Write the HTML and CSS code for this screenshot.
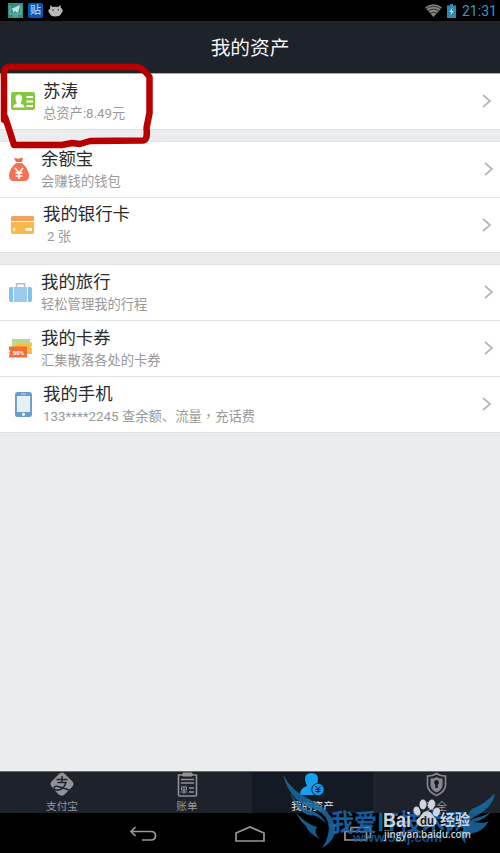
FILE: index.html
```html
<!DOCTYPE html>
<html lang="zh-CN">
<head>
<meta charset="utf-8">
<title>我的资产</title>
<link rel="stylesheet" href="styles.css">
</head>
<body>
<div class="screen">
  <div class="status">
    <svg width="15" height="15" viewBox="0 0 15 15"><rect width="15" height="15" fill="#2f9184"/><path d="M2 3v8h11V3M5 13h5" fill="none" stroke="#79b9af"/><path d="M3 6l9-4-2 8-3-2-2 2V7z" fill="#c9ddd9"/></svg>
    <span class="tieba">贴</span>
    <svg width="15" height="12" viewBox="0 0 15 12"><path d="M2.500 0l2 2Q7 1.500 10 2L12.500 0l.3 3Q15 3.500 14.700 6.300L13.500 8Q12.500 11.500 7 11.500 2.500 11.500 1.700 8.500 0 8 .5 5 1 4 2 4z" fill="#b9b9b9"/><circle cx="5" cy="5" r=".8" fill="#333"/><circle cx="10.300" cy="4.700" r=".8" fill="#333"/></svg>
    <span class="grow"></span>
    <svg width="17" height="13" viewBox="0 0 17 13"><path d="M0 3.500Q8.500-3 17 3.500L8.500 13z" fill="#858585"/><path d="M1 5Q8.500-.5 16 5M3 7.200Q8.500 3 14 7.200M5 9.500Q8.500 6.700 12 9.500" fill="none" stroke="#161616" stroke-width=".8"/></svg>
    <svg width="9" height="14" viewBox="0 0 9 14"><path d="M3 0h3v1.500h3V14H0V1.500h3z" fill="#2c8bb0"/><path d="M5.500 3.500L2.500 8h2L3.500 11.500 6.700 7h-2z" fill="#d5e8ee"/></svg>
    <span class="time">21:31</span>
  </div>
  <header class="title">我的资产</header>

  <main class="list">
    <section class="group">
      <div class="row wide first">
        <svg class="icon" width="24" height="18" viewBox="0 0 24 18"><rect width="24" height="18" rx="2" fill="#84c93d"/><path d="M2 15.500q0-3 4-4Q4.500 9 4.500 6q0-3.500 3.300-3.500T11 6q0 3-1.500 5.500 4 1 4 4z" fill="#fff"/><path d="M15.500 5H22M15.500 9.500H22M15.500 14H22" stroke="#fff" stroke-width="1.800"/></svg>
        <div class="copy"><div class="name">苏涛</div><div class="note">总资产:8.49元</div></div>
        <svg class="arrow near" width="10" height="14" viewBox="0 0 10 14"><path d="M1 1l7 6-7 6"/></svg>
      </div>
    </section>
    <section class="group">
      <div class="row">
        <svg class="icon" width="20" height="25" viewBox="0 0 20 25"><path d="M5 1l4 .8L14 .5l-1 4.500H7z" fill="#ef684c"/><path d="M7 6h6q7 6 7 13 0 5-5 5H5q-5 0-5-5Q0 12 7 6z" fill="#f67150"/><path d="M6 11l4 5 4-5M10 16v6M6.500 16h7M6.500 19h7" fill="none" stroke="#fff" stroke-width="1.700"/></svg>
        <div class="copy"><div class="name">余额宝</div><div class="note">会赚钱的钱包</div></div>
        <svg class="arrow" width="10" height="14" viewBox="0 0 10 14"><path d="M1 1l7 6-7 6"/></svg>
      </div>
      <div class="row wide">
        <svg class="icon" width="23" height="18" viewBox="0 0 23 18"><rect width="23" height="18" rx="2" fill="#f7b850"/><path d="M0 5V2q0-2 2-2h19q2 0 2 2v3z" fill="#f2a25a"/><path d="M0 5.500h23" stroke="#fff3d9"/><path d="M4 12l-1.500 1.500L4 15" fill="none" stroke="#fff0c8" stroke-width="1.300"/><path d="M14.500 13.500H21" stroke="#fff0c8" stroke-width="3"/></svg>
        <div class="copy"><div class="name">我的银行卡</div><div class="note indent">2 张</div></div>
        <svg class="arrow near" width="10" height="14" viewBox="0 0 10 14"><path d="M1 1l7 6-7 6"/></svg>
      </div>
    </section>
    <section class="group">
      <div class="row">
        <svg class="icon" width="23" height="19" viewBox="0 0 23 19"><path d="M7.500 4V.8h8V4" fill="none" stroke="#b8bdc1" stroke-width="1.500"/><rect y="4" width="23" height="15" rx="2" fill="#83c2ed"/><path d="M5 4h13v15H5z" fill="#9acbef"/><path d="M4.500 4v15M18.500 4v15" stroke="#e8f5fc"/></svg>
        <div class="copy"><div class="name">我的旅行</div><div class="note">轻松管理我的行程</div></div>
        <svg class="arrow" width="10" height="14" viewBox="0 0 10 14"><path d="M1 1l7 6-7 6"/></svg>
      </div>
      <div class="row">
        <svg class="icon" width="24" height="20" viewBox="0 0 24 20"><path d="M3 1h18v13H3z" fill="#bcd98a"/><path d="M6 6h14l3-2v3l-1 2 1 2v5H6z" fill="#f8bd47"/><path d="M0 8.500h18v11H0v-2l1-1.500-1-1.500 1-1.500-1-1.500z" fill="#f27035"/><text x="9.500" y="16.500" text-anchor="middle" class="ticket">50%</text></svg>
        <div class="copy"><div class="name">我的卡券</div><div class="note">汇集散落各处的卡券</div></div>
        <svg class="arrow" width="10" height="14" viewBox="0 0 10 14"><path d="M1 1l7 6-7 6"/></svg>
      </div>
      <div class="row wide">
        <svg class="icon handset" width="17" height="25" viewBox="0 0 18 25" preserveAspectRatio="none"><rect width="18" height="25" rx="2.500" fill="#669dcc"/><path d="M2 4h14v16H2z" fill="#e8eff4"/><path d="M6.500 2h5" stroke="#d9e8f4"/><circle cx="9" cy="22.300" r="1.600" fill="#fff"/></svg>
        <div class="copy"><div class="name">我的手机</div><div class="note phone">133****2245 查余额、流量<span class="comma" lang="zh-TW">，</span>充话费</div></div>
        <svg class="arrow near" width="10" height="14" viewBox="0 0 10 14"><path d="M1 1l7 6-7 6"/></svg>
      </div>
    </section>
  </main>

  <nav class="tabs">
    <div class="tab shift"><svg width="24" height="25" viewBox="0 0 24 25"><path d="M9 2q3-3 6 0l7 7q3 3 0 6l-8 8q-3 2-6-1l-6-7q-3-3 0-6z" fill="#919396"/><path d="M6.500 7.500h11M12 4v7M7.500 10.500H16q-2 6-7 7.500-5 .5-5-2 1-3 6-1l12 4" fill="none" stroke="#20252f" stroke-width="1.500"/></svg><span>支付宝</span></div>
    <div class="tab shift more"><svg width="21" height="25" viewBox="0 0 21 25"><path d="M1.500 3h18v20q0 1-1 1h-16q-1 0-1-1z" fill="none" stroke="#8e9093" stroke-width="1.600"/><path d="M6 1h9v3H6z" fill="#919396" stroke="#919396"/><path d="M4 7.500h13M4 11h13M12 16h5M12 20h5" stroke="#919396" stroke-width="1.500"/><path d="M5 13.500l1 1M9 13.500l-1 1M4.500 15h5v3h-5zM3.500 20h7M7 15v7" fill="none" stroke="#919396"/></svg><span>账单</span></div>
    <div class="tab active"><svg width="25" height="25" viewBox="0 0 25 25"><path d="M0 23q0-7 7-9Q5 10 5 7 5 1 11.500 1T18 7q0 4-2 7l6 4v5z" fill="#149ff1"/><circle cx="18" cy="17.500" r="6.200" fill="#129af0" stroke="#151b25"/><path d="M15.500 14l2.500 3 2.500-3M18 17v4M15.500 17.500h5M15.500 19.500h5" fill="none" stroke="#141e2a"/></svg><span>我的资产</span></div>
    <div class="tab"><svg width="21" height="25" viewBox="0 0 21 25"><path d="M10.500 1.500q4 3 9 2.500v10q-1 6-9 9.500-8-3.500-9-9.500V4q5 .5 9-2.500z" fill="none" stroke="#85878b" stroke-width="1.600"/><path d="M10.500 5q3 2 6 1.500V14q-1 4-6 6.500-5-2.500-6-6.500V6.500q3 .5 6-1.500z" fill="#85878b"/><circle cx="10.500" cy="10.500" r="2.400" fill="#151a21"/><path d="M9.300 11h2.400v5H9.300z" fill="#151a21"/></svg><span>安全</span></div>
  </nav>
  <div class="keys">
    <svg class="back" width="28" height="16" viewBox="0 0 28 16"><path d="M6.500 1L2 5.500 6.500 10M2.500 5.500H22q4.500 0 4.500 4.200T22 14H13"/></svg>
    <svg width="32" height="18" viewBox="0 0 32 18"><path d="M2 16V8L16 2 30 8v8z"/></svg>
    <svg width="28" height="17" viewBox="0 0 28 17"><path d="M7 6V1.500h19.500v10H23M1 5.500h21.500v8.500H1z"/></svg>
  </div>

  <svg class="overlay" width="500" height="853" viewBox="0 0 500 853">
    <path class="marker" d="M4 120V78Q3 67 9 67L138 67Q144 69 149.500 77L149.500 113 146.500 128Q148 140 143 140.500L90 141 80 144 72 143 62 145H14L9 129 5 117z"/>
    <g class="bird">
      <path d="M283 775Q293 792 309 799 333 811 335 828 336 840 322 848 331 835 328 822 325 812 309 807 290 800 283 775z"/>
      <path d="M290 793Q299 808 312 811 322 814 326 824 318 814 308 815 296 810 290 793z"/>
      <path d="M296 812Q304 823 317 827 313 832 320 839 308 833 306 826 299 820 296 812z"/>
      <path d="M495 793Q493 808 474 817 467 822 463 832 464 817 472 809 485 804 495 793z"/>
      <path d="M491 811Q486 820 473 822 485 824 489 821 483 832 470 834 463 838 466 844 459 838 463 831 467 819 479 817 487 815 491 811z"/>
    </g>
    <text class="site" x="331" y="831" textLength="137" lengthAdjust="spacingAndGlyphs">我爱IT技术网</text>
    <text class="siteurl" x="353" y="842" textLength="89" lengthAdjust="spacingAndGlyphs">www.52ij.com</text>
    <g class="baidu">
      <ellipse cx="417" cy="811" rx="3.200" ry="4.500" transform="rotate(-20 417 811)"/>
      <ellipse cx="423" cy="804.500" rx="3.500" ry="5"/>
      <ellipse cx="431.500" cy="804.500" rx="3.500" ry="5" transform="rotate(10 431.500 804.500)"/>
      <ellipse cx="436.500" cy="812" rx="3.300" ry="4.500" transform="rotate(20 436.500 812)"/>
      <path d="M427 811q4 0 7 6 4 3 2 7-3 4-9 2-7 2-10-2-2-4 3-7 3-6 7-6z"/>
      <text x="383" y="827" class="bai" textLength="28" lengthAdjust="spacingAndGlyphs">Bai</text>
      <text x="420" y="825" class="du" textLength="14" lengthAdjust="spacingAndGlyphs">du</text>
      <text x="440" y="825" class="jy" textLength="30" lengthAdjust="spacingAndGlyphs">经验</text>
      <text x="384" y="838" class="jurl" textLength="87" lengthAdjust="spacingAndGlyphs">jingyan.baidu.com</text>
    </g>
  </svg>
</div>
</body>
</html>
```

FILE: styles.css
```css
* { box-sizing: border-box; }
body { margin: 0; font-family: Roboto, "Noto Sans CJK SC", sans-serif; }
.screen { position: relative; display: flex; flex-direction: column; width: 500px; height: 853px; overflow: hidden; background: #ebeced; }
svg { display: block; flex: none; }
.status { height: 21px; background: #000; display: flex; align-items: center; padding: 0 5px 0 8px; gap: 5px; }
.tieba { width: 15px; height: 15px; border-radius: 2px; background: #0758b5; color: #b8d1e8; font-size: 11px; line-height: 15px; text-align: center; font-weight: 500; }
.grow { flex: 1; }
.time { color: #2d9bc6; font-size: 14px; line-height: 20px; width: 33px; margin-left: 1px; white-space: nowrap; }
.title { height: 52px; padding-top: 2px; background: #1e222b; color: #f5f5f5; font-size: 19.700px; line-height: 50px; text-align: center; }
.title { line-height: 52px; }
.list { display: flex; flex-direction: column; gap: 12px; flex: 1; }
.group { background: #fff; box-shadow: 0 1px #e0e1e2; }
.row { height: 56px; display: grid; grid-template-columns: 33px 1fr 10px; align-items: center; padding: 0 6px 1px 8px; border-top: 1px solid #e3e4e5; }
.row.first { border-top-color: #aaa; }
.group:nth-child(2) .row.wide { height: 55px; }
.row.wide { padding-left: 10px; }
.icon { justify-self: start; margin-left: 1px; }
.row .handset { margin-left: 5px; }
.copy { display: grid; grid-template-rows: 25px 20px; }
.name { color: #2b2b2b; font-size: 17.400px; line-height: 25px; white-space: nowrap; }
.note { color: #999; font-size: 13.300px; line-height: 20px; white-space: nowrap; }
.phone { letter-spacing: .03px; }
.comma { font-family: "Noto Sans CJK TC", sans-serif; line-height: 1; }
.indent { padding-left: 4px; }
.arrow path { fill: none; stroke: #b5b5b5; stroke-width: 1.700; }
.arrow.near { margin-left: -2px; }
.ticket { fill: #fff; font: 700 6px Roboto, sans-serif; }
.tabs { height: 42px; background: #1e222b; display: grid; grid-template-columns: 126px 126px 121px 1fr; border-top: 1px solid #666b70; }
.tab { display: flex; flex-direction: column; align-items: center; color: #969799; font-size: 10.700px; line-height: 17px; white-space: nowrap; }
.tab span { margin-top: 1px; }
.shift { padding-right: 2px; }
.shift.more { padding-right: 4px; }
.active { background: #141a23; color: #e8e8e8; }
.keys { height: 40px; background: #000; display: flex; justify-content: center; align-items: center; gap: 78px; padding-top: 2px; }
.keys path { fill: none; stroke: #999; stroke-width: 1.700; }
.keys .back { margin-right: -1px; margin-left: 1px; }
.overlay { position: absolute; left: 0; top: 0; pointer-events: none; }
.marker { fill: none; stroke: #b90000; stroke-width: 6.500; stroke-linejoin: round; }
.bird { fill: #1b6ba5; opacity: .85; }
.site { fill: #1768ae; opacity: .9; font: 700 24px "Noto Sans CJK SC", sans-serif; }
.siteurl { fill: #165f9c; opacity: .85; font: 700 12px "Liberation Sans", sans-serif; }
.baidu { fill: #d0d3d7; }
.baidu .bai { font: 700 20px "Liberation Sans", sans-serif; }
.baidu .du { fill: #171b22; font: 700 12px "Liberation Sans", sans-serif; }
.baidu .jy { font: 700 15px "Noto Sans CJK SC", sans-serif; }
.baidu .jurl { font: 600 10.500px "Open Sans", sans-serif; }
```
